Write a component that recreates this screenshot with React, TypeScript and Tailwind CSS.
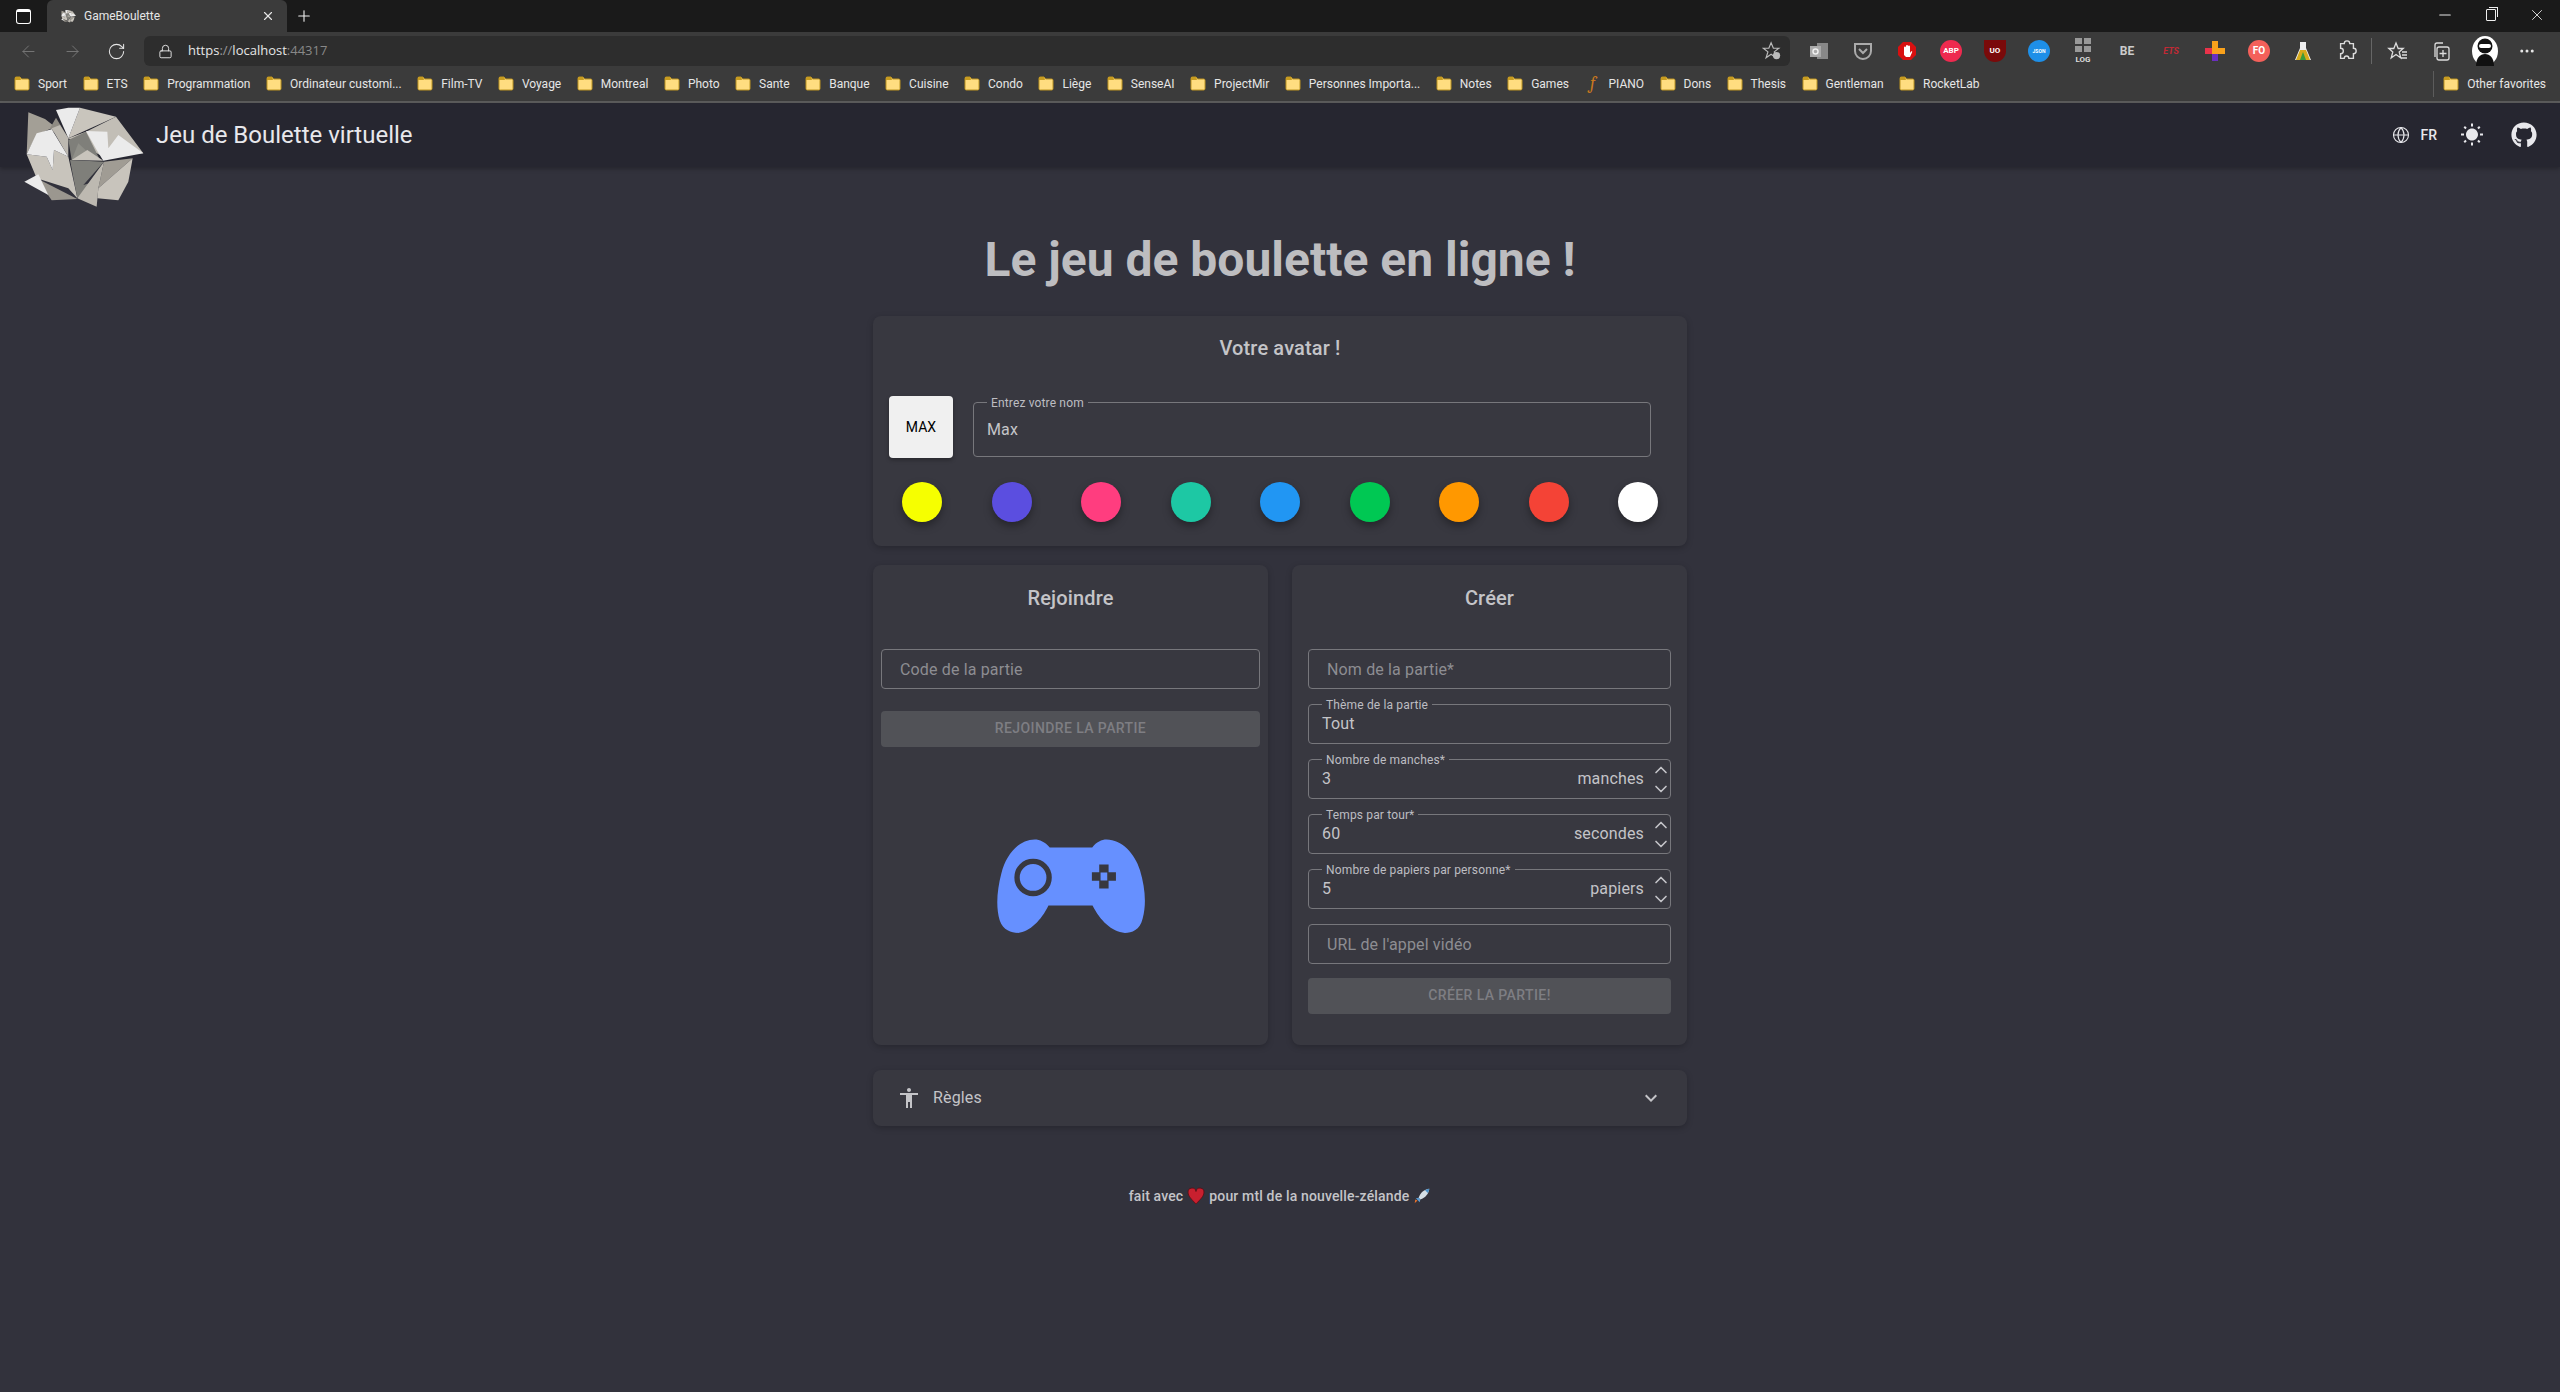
import React from 'react'
import { ArrowLeft, ArrowRight, ChevronDown, ChevronUp, Globe, Lock, Minus, MoreHorizontal, Plus, RotateCw, X } from 'lucide-react'
import { FaGithub } from 'react-icons/fa'

const bookmarks = [
    'Sport', 'ETS', 'Programmation', 'Ordinateur customi...', 'Film-TV', 'Voyage', 'Montreal', 'Photo', 'Sante', 'Banque', 'Cuisine',
    'Condo', 'Liège', 'SenseAI', 'ProjectMir', 'Personnes Importa...', 'Notes', 'Games', 'PIANO', 'Dons', 'Thesis', 'Gentleman', 'RocketLab',
]

const colors = ['bg-[#f6ff00]', 'bg-[#5b4ee0]', 'bg-[#ff3d7f]', 'bg-[#1dc8a4]', 'bg-[#2196f3]', 'bg-[#00c853]', 'bg-[#ff9800]', 'bg-[#f44336]', 'bg-white']

const logoPolys: [string, string][] = [
    ['85,52 135,72 165,95 110,120 80,178', '#a39f96'],
    ['150,100 168,68 205,130 160,110', '#8f8b83'],
    ['240,38 348,65 205,130', '#c9c5bd'],
    ['168,45 205,38 240,38 205,130', '#ebebeb'],
    ['155,100 180,90 205,130 205,185', '#bdb9b1'],
    ['80,178 140,185 158,225 162,165 205,185 232,310 205,280 110,250', '#c8c4bc'],
    ['110,115 155,103 205,185 162,165 158,225 140,185 80,178', '#ebebeb'],
    ['348,65 258,110 205,130 300,180 430,175', '#c2bEb6'],
    ['205,135 258,110 300,195 215,195', '#7f7f7a'],
    ['235,145 262,170 215,195', '#8f8f88'],
    ['215,195 262,165 310,197', '#c8c4bc'],
    ['258,108 322,110 325,160 355,120 430,175 310,197 290,165', '#ebebeb'],
    ['210,195 312,200 250,270 278,262 232,310', '#7f7f7a'],
    ['312,200 398,190 295,280', '#a09c94'],
    ['398,190 385,260 355,316 292,310 295,280', '#c8c4bc'],
    ['312,200 232,310 290,335 295,280', '#bdb9b1'],
    ['110,250 232,312 155,316', '#9b978f'],
    ['73,260 115,238 145,300', '#ebebeb'],
]

const Logo: React.FC<{ className: string }> = ({ className }) => (
    <svg viewBox="0 0 480 360" className={className}>
        {logoPolys.map(([points, fill]) => (
            <polygon key={points} points={points} fill={fill} />
        ))}
    </svg>
)

const Folder = () => (
    <svg viewBox="0 0 16 15" className="w-4 h-[15px] shrink-0">
        <path d="M1 2.5C1 1.7 1.5 1 2.2 1H6l1.5 2h6.3c.7 0 1.2.6 1.2 1.3v8.4c0 .7-.5 1.3-1.2 1.3H2.2C1.500 14 1 13.400 1 12.700z" fill="#ffdd80" stroke="#bd9420" />
        <path d="M1 2.500C1 1.700 1.500 1 2.200 1H6l1 3H1z" fill="#c79b1f" />
    </svg>
)

const Bookmark: React.FC<{ name: string }> = ({ name }) => (
    <div className="flex items-center gap-2 whitespace-nowrap">
        {name === 'PIANO' ? <span className="w-4 text-center font-serif italic text-[18px] leading-none text-[#c9781e]">f</span> : <Folder />}
        <span>{name}</span>
    </div>
)

const extensionBox = 'w-[22px] h-[22px] flex items-center justify-center font-bold leading-none'

const Extensions = () => (
    <div className="flex items-center gap-[22px] h-full">
        <svg viewBox="0 0 22 22" className="w-[22px] h-[22px]">
            <rect x="9" y="3" width="11" height="16" fill="#888" />
            <rect x="2" y="6" width="11" height="11" fill="#aaa" />
            <circle cx="7.500" cy="11.500" r="2.500" fill="none" stroke="#eee" strokeWidth="1.500" />
        </svg>
        <svg viewBox="0 0 22 22" className="w-[22px] h-[22px]">
            <path d="M3 4h16v7a8 8 0 0 1-16 0z" fill="none" stroke="#aaa" strokeWidth="2" />
            <path d="M7 9l4 4 4-4" fill="none" stroke="#aaa" strokeWidth="2" />
        </svg>
        <svg viewBox="0 0 22 22" className="w-[22px] h-[22px]">
            <path d="M7 2h8l5 5v8l-5 5H7l-5-5V7z" fill="#d81010" />
            <path d="M8 15V7.500a1 1 0 0 1 2 0V11V6a1 1 0 0 1 2 0v5V6.500a1 1 0 0 1 2 0V13l1-1.500c1-.7 1.500 0 1 1L14 17H10z" fill="#fff" />
        </svg>
        <div className={`${extensionBox} text-[8px] text-white bg-[#ee2a4f] rounded-full`}>ABP</div>
        <div className={`${extensionBox} text-[8px] text-white bg-[#7a0a0a] rounded-b-full rounded-t-sm`}>UO</div>
        <div className={`${extensionBox} text-[5px] text-white bg-[#1e8fe8] rounded-full`}>JSON</div>
        <div className="w-[22px] h-[26px] flex flex-col items-center justify-between leading-none text-[#ddd]">
            <div className="grid grid-cols-2 gap-[2px]">
                <div className="w-[7px] h-[6px] bg-[#999]" />
                <div className="w-[7px] h-[6px] bg-[#999]" />
                <div className="w-[7px] h-[6px] bg-[#999]" />
                <div className="w-[7px] h-[6px] bg-[#999]" />
            </div>
            <span className="text-[8px] font-bold">LOG</span>
        </div>
        <div className={`${extensionBox} text-[12px] text-[#ccc]`}>BE</div>
        <div className={`${extensionBox} text-[9px] italic text-[#c22a35]`}>ETS</div>
        <svg viewBox="0 0 22 22" className="w-[22px] h-[22px]">
            <path d="M8 1h6v7h7v6h-7v7H8v-7H1V8h7z" fill="#f9a11b" />
            <rect x="8" y="14" width="6" height="7" fill="#6a2fc0" />
            <rect x="1" y="8" width="7" height="6" fill="#e8334a" />
        </svg>
        <div className={`${extensionBox} text-[10px] text-white bg-[#f4605a] rounded-full`}>FO</div>
        <svg viewBox="0 0 22 22" className="w-[22px] h-[22px]">
            <path d="M8 2h6v6l5 12H3L8 8z" fill="#eee" />
            <path d="M8 10h6l4 10H4z" fill="#d6a91a" />
            <path d="M11 12l3 8H8z" fill="#3a9a3a" />
        </svg>
        <svg viewBox="0 0 24 24" className="w-[22px] h-[22px]" fill="none" stroke="#ddd" strokeWidth="1.500">
            <path d="M9 4a3 3 0 0 1 6 0h4v5a3 3 0 0 1 0 6v5h-5a2.500 2.500 0 0 0-5 0H5v-5a3 3 0 0 0 0-6V4z" />
        </svg>
    </div>
)

const ChromeBar = () => (
    <div className="text-[#e6e6e6]">
        <div className="h-8 bg-[#1a1a1a] flex items-center relative">
            <div className="w-[47px] flex justify-center">
                <div className="w-[15px] h-[15px] rounded-[3px] border border-white border-t-[3px]" />
            </div>
            <div className="w-[240px] h-8 bg-[#3b3b3b] rounded-t-md flex items-center pl-[11px] pr-[12px] text-xs">
                <Logo className="w-5 h-4 mr-[6px]" />
                <span className="flex-1">GameBoulette</span>
                <X size={14} />
            </div>
            <Plus size={18} strokeWidth={1.500} className="ml-[8px] text-[#eee]" />
            <div className="absolute right-[14px] top-[6px] flex items-center gap-[32px]">
                <Minus size={18} strokeWidth={1.500} />
                <div className="relative w-[10px] h-3 border border-[#eee] rounded-[1px]">
                    <div className="absolute -top-[3px] -right-[3px] w-[9px] h-[10px] border-t border-r border-[#eee]" />
                </div>
                <X size={18} strokeWidth={1.200} />
            </div>
        </div>
        <div className="h-[34px] bg-[#3b3b3b] flex items-start pt-1">
            <div className="w-[144px] shrink-0 h-[30px] flex items-center pl-[19px] gap-[25px] text-[#777]">
                <ArrowLeft size={19} strokeWidth={1.200} className="shrink-0" />
                <ArrowRight size={19} strokeWidth={1.200} className="shrink-0" />
                <RotateCw size={19} strokeWidth={1.300} className="shrink-0 text-[#e6e6e6]" />
            </div>
            <div className="w-[1646px] shrink-0 h-[30px] bg-[#2d2d2d] rounded-md flex items-center pl-[44px] pr-[8px] font-['Open_Sans',sans-serif] text-[13px] relative">
                <Lock size={15} strokeWidth={1.500} className="absolute left-[14px]" />
                <span className="flex-1">
                    https<span className="text-[#999]">://</span>localhost<span className="text-[#888]">:44317</span>
                </span>
                <svg viewBox="0 0 22 22" className="w-5 h-5" fill="none" stroke="#bbb" strokeWidth="1.300">
                    <path d="M10 2l2.500 6h6l-5 4 2 6.500-5.500-4-5.500 4 2-6.500-5-4h6z" />
                    <circle cx="16" cy="16" r="4" fill="#bbb" stroke="none" />
                </svg>
            </div>
            <div className="flex-1 h-[30px] flex items-center pl-[18px]">
                <Extensions />
                <div className="w-px h-[26px] bg-[#666] ml-[13px]" />
                <svg viewBox="0 0 22 22" className="w-[22px] h-[22px] ml-[15px]" fill="none" stroke="#ddd" strokeWidth="1.300">
                    <path d="M9 3l2.200 5.500h5l-4 3.500 1.600 6-4.800-3.500-4.800 3.500 1.600-6-4-3.500h5z" />
                    <path d="M15 12h5M15 15h5M14 18h6" />
                </svg>
                <svg viewBox="0 0 22 22" className="w-[22px] h-[22px] ml-[21px]" fill="none" stroke="#ddd" strokeWidth="1.300">
                    <rect x="7" y="7" width="12" height="13" rx="2" />
                    <path d="M5 17V5a2 2 0 0 1 2-2h6M13 10v7M9.500 13.500h7" />
                </svg>
                <svg viewBox="0 0 26 30" className="w-[26px] h-[30px] ml-[20px]">
                    <ellipse cx="13" cy="15" rx="13" ry="15" fill="#fff" />
                    <circle cx="13" cy="10" r="7.500" fill="#111" />
                    <path d="M4 30c0-8 4-12 9-12s9 4 9 12z" fill="#111" />
                    <rect x="7" y="8" width="12" height="4" rx="2" fill="#fff" />
                </svg>
                <MoreHorizontal size={18} className="ml-[20px]" />
            </div>
        </div>
        <div className="h-[37px] bg-[#3b3b3b] border-b-2 border-[#5c5c5c] flex items-center pl-[14px] pr-[14px] text-xs gap-[15.5px]">
            {bookmarks.map((name) => (
                <Bookmark key={name} name={name} />
            ))}
            <div className="w-px h-[26px] bg-[#5c5c5c] ml-auto -mr-[6px]" />
            <Bookmark name="Other favorites" />
        </div>
    </div>
)

const AppBar = () => (
    <header className="relative h-[64px] bg-[#262630] shadow-[0_2px_4px_rgba(0,0,0,0.25)] flex items-center pl-[156px] pr-[23px] text-[#e8e8ec]">
        <Logo className="absolute left-0 top-[-8px] w-[160px] h-[120px]" />
        <h1 className="text-2xl">Jeu de Boulette virtuelle</h1>
        <div className="ml-auto flex items-center">
            <Globe size={18} strokeWidth={1.500} />
            <span className="ml-[10px] text-sm font-medium">FR</span>
            <svg viewBox="0 0 24 24" className="w-6 h-6 ml-[23px] fill-current">
                <path d="M6.760 4.840l-1.800-1.790-1.410 1.410 1.790 1.790 1.420-1.410zM4 10.500H1v2h3v-2zm9-9.950h-2V3.500h2V.550zm7.450 3.910l-1.410-1.410-1.790 1.790 1.410 1.410 1.790-1.790zm-3.210 13.700l1.790 1.800 1.410-1.410-1.800-1.790-1.400 1.400zM20 10.500v2h3v-2h-3zm-8-5c-3.310 0-6 2.690-6 6s2.690 6 6 6 6-2.690 6-6-2.690-6-6-6zm-1 16.950h2V19.500h-2v2.950zm-7.450-3.910l1.410 1.410 1.790-1.800-1.410-1.410-1.790 1.800z" />
            </svg>
            <FaGithub size={26} className="ml-[27px]" />
        </div>
    </header>
)

const cardClass = 'rounded-lg bg-[#383840] shadow-[0_2px_6px_rgba(0,0,0,0.22)]'
const cardTitle = 'text-xl leading-7 font-medium tracking-[0.15px] text-center text-[#c4c4c8]'
const floatingLabel = 'absolute left-[13px] -top-[8px] bg-[#383840] px-[4px] text-xs leading-4 whitespace-nowrap text-[#bdbdc2]'

interface FieldProps {
    label?: string
    value?: string
    placeholder?: string
    unit?: string
}

const Field: React.FC<FieldProps> = ({ label, value, placeholder, unit }) => (
    <div className="relative h-10 rounded border border-[#77777c] flex items-center tracking-[0.15px] text-[#c4c4c8]">
        {label && <span className={floatingLabel}>{label}</span>}
        {placeholder ? <span className="pl-[18px] pt-px text-[#8d8d92]">{placeholder}</span> : <span className="pl-[13px]">{value}</span>}
        {unit && (
            <div className="ml-auto flex items-center">
                <span>{unit}</span>
                <div className="w-[18px] ml-2 flex flex-col items-center -space-y-[1px]">
                    <ChevronUp size={20} strokeWidth={2} />
                    <ChevronDown size={20} strokeWidth={2} />
                </div>
            </div>
        )}
    </div>
)

const DisabledButton: React.FC<{ children: React.ReactNode; className?: string }> = ({ children, className = '' }) => (
    <button type="button" className={`w-full h-9 pb-[2px] rounded bg-[#515257] text-sm font-medium tracking-[0.4px] text-[#7e7e83] ${className}`}>
        {children}
    </button>
)

const Gamepad = () => (
    <svg viewBox="412 837 443 281" className="w-[148px] h-[94px]">
        <path
            d="M570 862C555 845 540 838 525 838C480 838 440 880 425 940C412 990 408 1040 420 1080C430 1110 455 1118 475 1118C510 1115 545 1080 566 1036L698 1036C720 1080 755 1115 795 1118C815 1118 840 1110 848 1075C860 1030 855 980 840 930C825 880 785 838 740 838C725 838 710 845 697 862Z"
            fill="#6690ff"
        />
        <circle cx="520" cy="952" r="48" fill="none" stroke="#383840" strokeWidth="16" />
        <path d="M718 913h28v24h-28zM718 961h28v24h-28zM696 936h26v26h-26zM742 936h26v26h-26z" fill="#383840" />
    </svg>
)

const Heart = () => (
    <svg viewBox="0 0 16 16" className="inline-block w-[18px] h-[18px] mx-[4px] align-[-4px]">
        <path d="M8 15C4 11 1 8 1 5a3.500 3.500 0 0 1 7-1 3.500 3.500 0 0 1 7 1c0 3-3 6-7 10z" fill="#c8202f" stroke="#5a0c12" strokeWidth=".7" />
    </svg>
)

const Rocket = () => (
    <svg viewBox="0 0 16 16" className="inline-block w-[18px] h-[18px] ml-[4px] align-[-4px]">
        <path d="M14.500 1.500C10 2 6.500 5 5 9.500L6.500 11C11 9.500 14 6 14.500 1.500z" fill="#d5dfe6" />
        <path d="M14.500 1.500c-1.500.2-2.700.6-3.800 1.300l2.500 2.500c.7-1.100 1.100-2.300 1.300-3.800z" fill="#4a90c8" />
        <path d="M5 9.500L2.500 10l3.500 3.500L6.500 11z" fill="#5a9ad0" />
        <path d="M4 12l-2.500 2.500L2 11z" fill="#e8702a" />
    </svg>
)

export default function App() {
    return (
        <div className="min-h-screen bg-[#32323c] font-[Roboto,sans-serif] overflow-hidden">
            <ChromeBar />
            <AppBar />
            <main className="mx-auto w-[814px] pt-[63px]">
                <h2 className="h-[60px] leading-[60px] mb-[26px] text-center text-5xl font-bold text-[#bdbdc0]">Le jeu de boulette en ligne !</h2>

                <section className={`${cardClass} h-[230px] pt-[18px]`}>
                    <h3 className={cardTitle}>Votre avatar !</h3>
                    <div className="mt-[34px] pl-4 pr-9 flex items-start gap-5">
                        <div className="w-16 h-[62px] shrink-0 rounded-sm bg-[#f0f0f0] text-black text-sm flex items-center justify-center shadow-[0_2px_4px_rgba(0,0,0,0.3)]">
                            MAX
                        </div>
                        <div className="relative flex-1 mt-[6px] h-[55px] rounded border border-[#77777c] pl-[13px] pt-[15px] tracking-[0.15px] text-[#c4c4c8]">
                            <span className={floatingLabel}>Entrez votre nom</span>
                            Max
                        </div>
                    </div>
                    <div className="mt-6 px-[29px] flex justify-between">
                        {colors.map((color) => (
                            <div key={color} className={`w-10 h-10 rounded-full shadow-[0_4px_8px_rgba(0,0,0,0.35)] ${color}`} />
                        ))}
                    </div>
                </section>

                <div className="mt-[19px] grid grid-cols-2 gap-6 h-[480px]">
                    <section className={`${cardClass} flex flex-col px-2 pt-[19px] pb-5`}>
                        <h3 className={cardTitle}>Rejoindre</h3>
                        <div className="mt-[37px] mb-[22px]">
                            <Field placeholder="Code de la partie" />
                        </div>
                        <DisabledButton>REJOINDRE LA PARTIE</DisabledButton>
                        <div className="flex-1 flex items-center justify-center">
                            <Gamepad />
                        </div>
                    </section>

                    <section className={`${cardClass} px-4 pt-[19px]`}>
                        <h3 className={cardTitle}>Créer</h3>
                        <div className="mt-[37px] flex flex-col gap-[15px]">
                            <Field placeholder="Nom de la partie*" />
                            <Field label="Thème de la partie" value="Tout" />
                            <Field label="Nombre de manches*" value="3" unit="manches" />
                            <Field label="Temps par tour*" value="60" unit="secondes" />
                            <Field label="Nombre de papiers par personne*" value="5" unit="papiers" />
                            <Field placeholder="URL de l'appel vidéo" />
                            <DisabledButton className="-mt-px">CRÉER LA PARTIE!</DisabledButton>
                        </div>
                    </section>
                </div>

                <section className={`${cardClass} mt-[25px] h-14 flex items-center pl-6 pr-6 tracking-[0.15px] text-[#c4c4c8]`}>
                    <svg viewBox="0 0 24 24" className="w-6 h-6 fill-current">
                        <path d="M12 2c1.100 0 2 .9 2 2s-.9 2-2 2-2-.9-2-2 .9-2 2-2zm9 7h-6v13h-2v-6h-2v6H9V9H3V7h18v2z" />
                    </svg>
                    <span className="ml-3">Règles</span>
                    <svg viewBox="0 0 24 24" className="ml-auto w-6 h-6 fill-current">
                        <path d="M16.590 8.590L12 13.170 7.410 8.590 6 10l6 6 6-6z" />
                    </svg>
                </section>

                <footer className="mt-[60px] h-5 leading-5 text-center text-sm font-medium tracking-[0.15px] text-[#c4c4c8]">
                    fait avec
                    <Heart />
                    pour mtl de la nouvelle-zélande
                    <Rocket />
                </footer>
            </main>
        </div>
    )
}
